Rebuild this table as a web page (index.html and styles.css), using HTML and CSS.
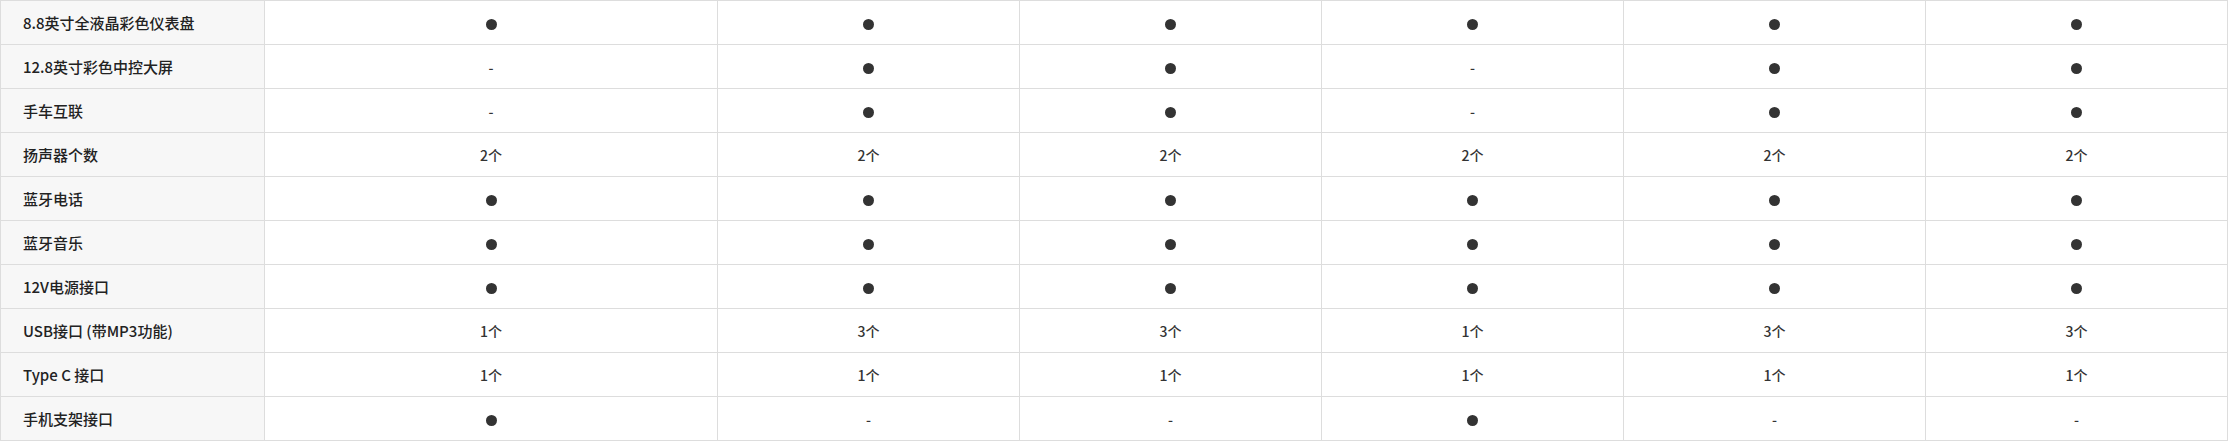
FILE: index.html
```html
<!DOCTYPE html>
<html lang="zh-CN">
<head>
<meta charset="utf-8">
<link rel="stylesheet" href="styles.css">
</head>
<body>
<table class="spec">
  <colgroup>
    <col class="c-label">
    <col class="c-first">
    <col class="c-val"><col class="c-val"><col class="c-val"><col class="c-val"><col class="c-val">
  </colgroup>
  <tbody>
    <tr><th>8.8英寸全液晶彩色仪表盘</th><td><i class="dot"></i></td><td><i class="dot"></i></td><td><i class="dot"></i></td><td><i class="dot"></i></td><td><i class="dot"></i></td><td><i class="dot"></i></td></tr>
    <tr><th>12.8英寸彩色中控大屏</th><td>-</td><td><i class="dot"></i></td><td><i class="dot"></i></td><td>-</td><td><i class="dot"></i></td><td><i class="dot"></i></td></tr>
    <tr><th>手车互联</th><td>-</td><td><i class="dot"></i></td><td><i class="dot"></i></td><td>-</td><td><i class="dot"></i></td><td><i class="dot"></i></td></tr>
    <tr><th>扬声器个数</th><td>2个</td><td>2个</td><td>2个</td><td>2个</td><td>2个</td><td>2个</td></tr>
    <tr><th>蓝牙电话</th><td><i class="dot"></i></td><td><i class="dot"></i></td><td><i class="dot"></i></td><td><i class="dot"></i></td><td><i class="dot"></i></td><td><i class="dot"></i></td></tr>
    <tr><th>蓝牙音乐</th><td><i class="dot"></i></td><td><i class="dot"></i></td><td><i class="dot"></i></td><td><i class="dot"></i></td><td><i class="dot"></i></td><td><i class="dot"></i></td></tr>
    <tr><th>12V电源接口</th><td><i class="dot"></i></td><td><i class="dot"></i></td><td><i class="dot"></i></td><td><i class="dot"></i></td><td><i class="dot"></i></td><td><i class="dot"></i></td></tr>
    <tr><th>USB接口 (带MP3功能)</th><td>1个</td><td>3个</td><td>3个</td><td>1个</td><td>3个</td><td>3个</td></tr>
    <tr><th>Type C 接口</th><td>1个</td><td>1个</td><td>1个</td><td>1个</td><td>1个</td><td>1个</td></tr>
    <tr><th>手机支架接口</th><td><i class="dot"></i></td><td>-</td><td>-</td><td><i class="dot"></i></td><td>-</td><td>-</td></tr>
  </tbody>
</table>
</body>
</html>
```
FILE: styles.css
```css
html, body {
  margin: 0;
  padding: 0;
  background: #fff;
}
body {
  font-family: "Noto Sans CJK SC", "Noto Sans", sans-serif;
  color: #333;
}
.spec {
  border-collapse: collapse;
  table-layout: fixed;
  width: 2228px;
}
.c-label { width: 264px; }
.c-first { width: 453px; }
.c-val { width: 302px; }
.spec th,
.spec td {
  border: 1px solid #dddddd;
  height: 44px;
  padding: 0;
  box-sizing: border-box;
}
.spec th {
  background: #f7f7f7;
  text-align: left;
  padding-left: 22px;
  font-size: 15px;
  font-weight: 500;
  color: #222;
  white-space: nowrap;
}
.spec td {
  text-align: center;
  font-size: 14px;
  font-weight: 500;
  color: #333;
}
.dot {
  display: inline-block;
  width: 11px;
  height: 11px;
  border-radius: 50%;
  background: #333;
  vertical-align: middle;
}
```
